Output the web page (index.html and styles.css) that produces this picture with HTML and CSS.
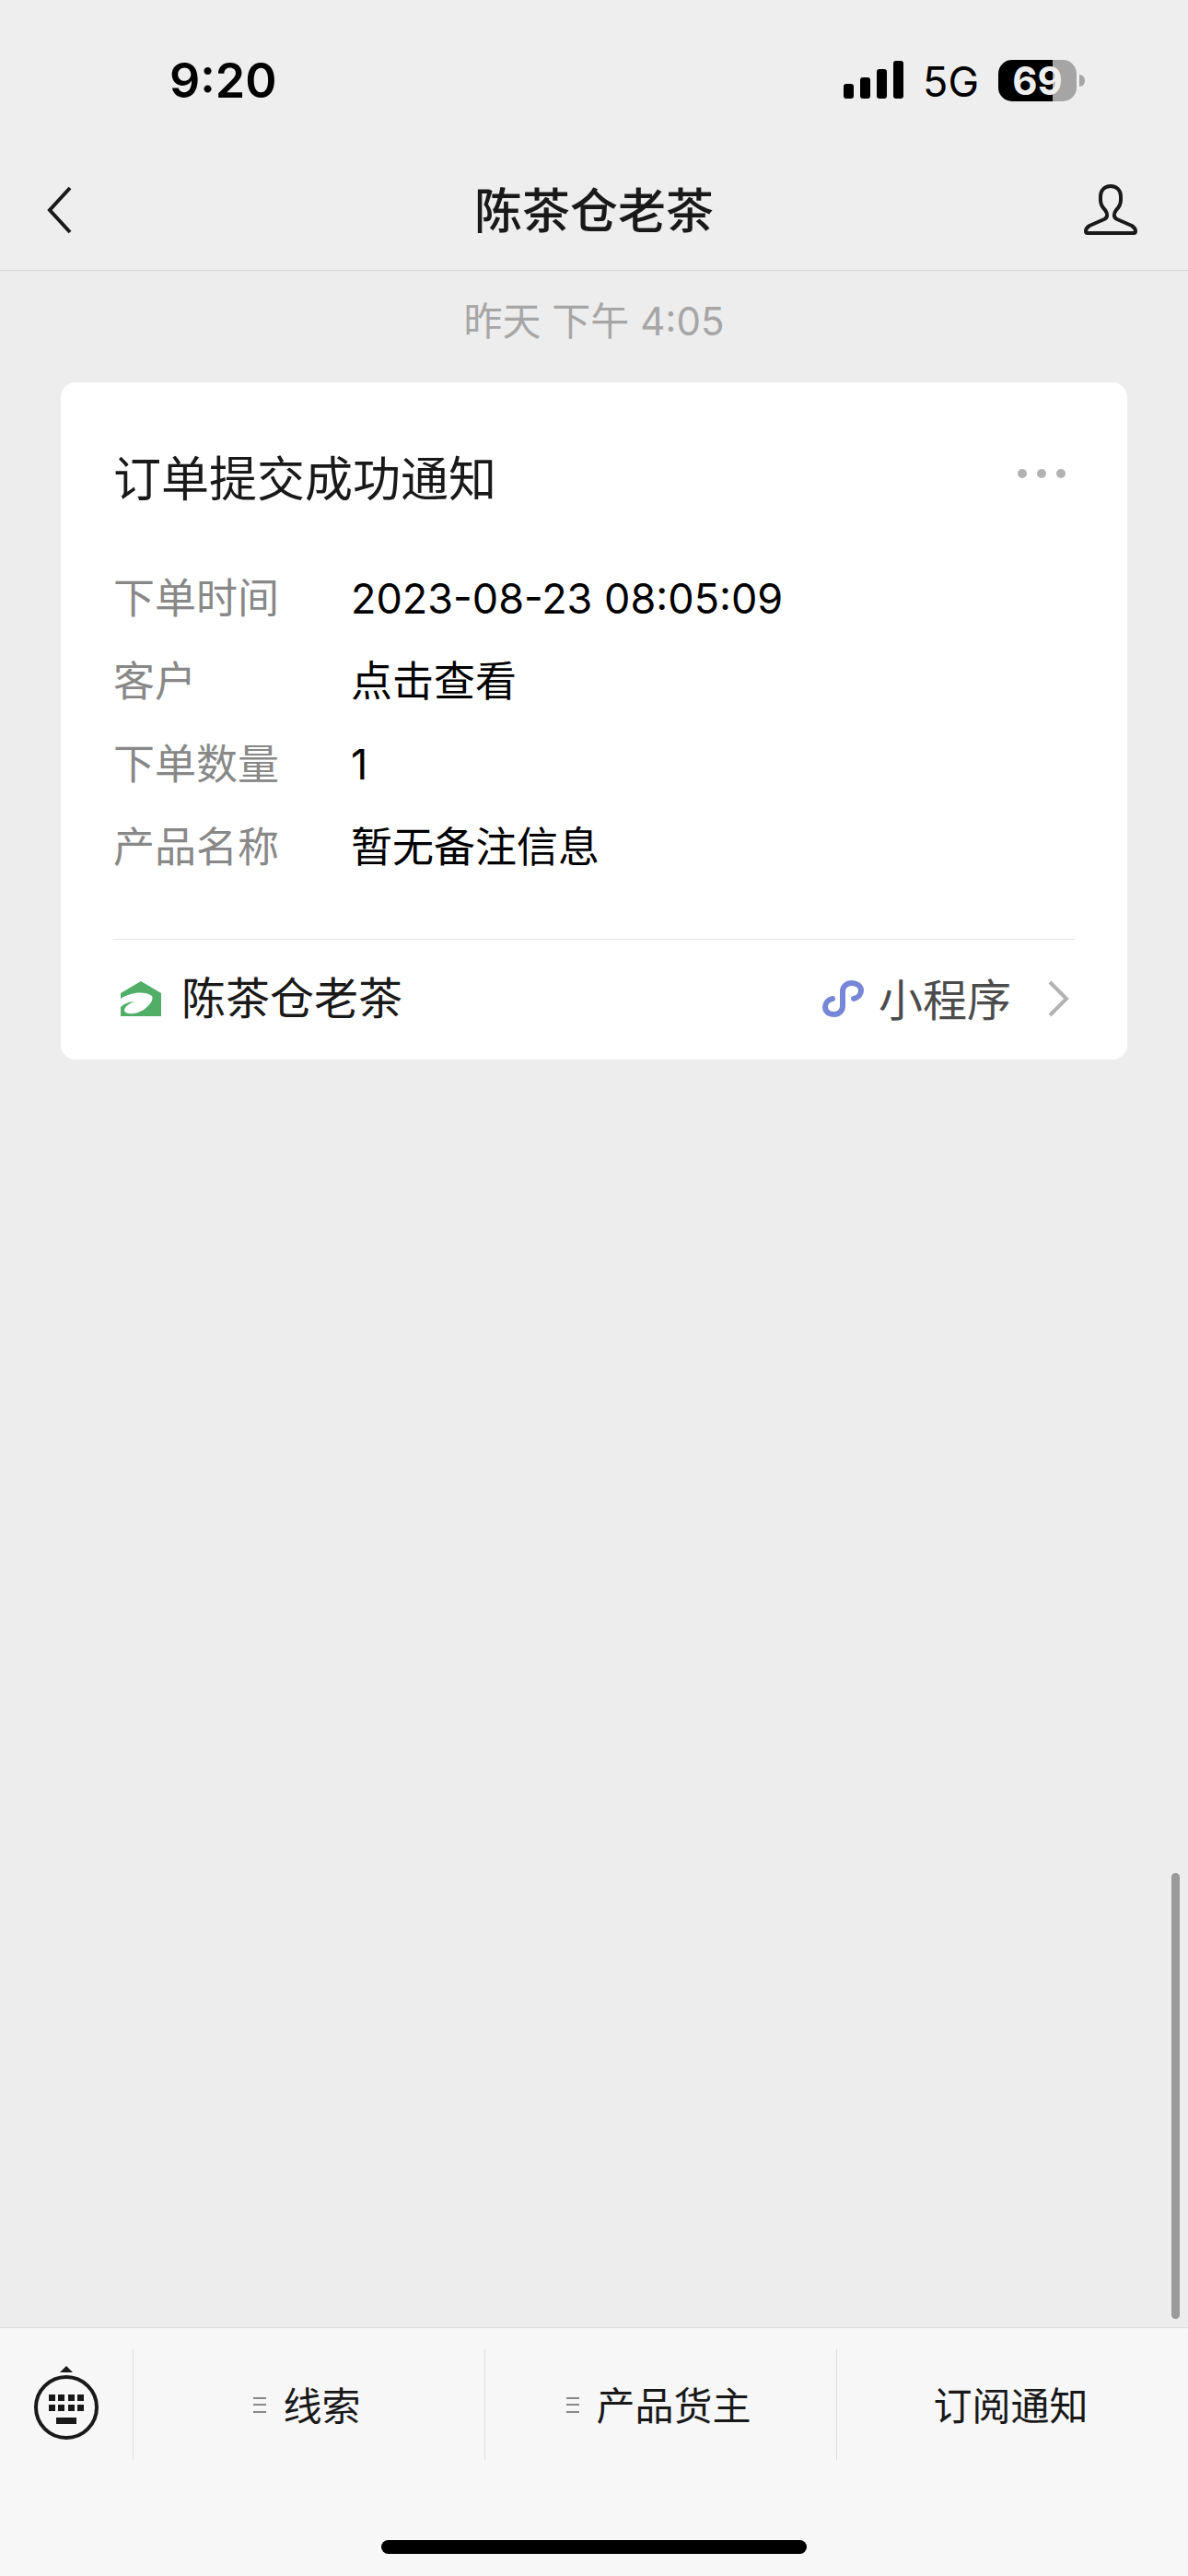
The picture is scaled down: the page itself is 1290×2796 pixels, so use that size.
FILE: index.html
```html
<!doctype html>
<html lang="zh-CN">
<head>
    <meta charset="utf-8">
    <meta name="viewport" content="width=device-width, initial-scale=1">
    <title>陈茶仓老茶</title>
    <link rel="stylesheet" href="styles.css">
</head>
<body>
    <header class="header">
        <div class="status-bar">
            <span class="time">9:20</span>
            <div class="status-icons">
                <svg class="signal" width="65" height="42" viewBox="0 0 65 42">
                    <rect x="0" y="25" width="11" height="16" rx="3"/>
                    <rect x="18" y="18" width="11" height="23" rx="3"/>
                    <rect x="36" y="9" width="11" height="32" rx="3"/>
                    <rect x="54" y="0" width="11" height="41" rx="3"/>
                </svg>
                <span class="network">5G</span>
                <div class="battery"><span class="battery-level">69</span></div>
            </div>
        </div>
        <nav class="nav-bar">
            <button class="icon-btn" type="button" aria-label="返回">
                <svg width="30" height="56" viewBox="0 0 30 56" fill="none" stroke="#191919" stroke-width="4">
                    <path d="M28 4 L6 28 L28 52"/>
                </svg>
            </button>
            <h1 class="nav-title">陈茶仓老茶</h1>
            <button class="icon-btn profile" type="button" aria-label="资料">
                <svg width="60" height="58" viewBox="0 0 60 58" fill="none" stroke="#191919" stroke-width="4" stroke-linejoin="round">
                    <path d="M30 3 C23 3 19 8 19 14 V18 C19 23 21 26 24 29 C27 33 27 37 23 39 L7 46 C4 48 3 49 3 52 C3 54 4 54 5 54 H55 C56 54 57 54 57 52 C57 49 56 48 53 46 L37 39 C33 37 33 33 36 29 C39 26 41 23 41 18 V14 C41 8 37 3 30 3 Z"/>
                </svg>
            </button>
        </nav>
    </header>

    <main class="messages">
        <p class="timestamp">昨天 下午 4:05</p>
        <article class="card">
            <div class="card-head">
                <h2 class="card-title">订单提交成功通知</h2>
                <button class="icon-btn more" type="button" aria-label="更多">
                    <svg width="54" height="12" viewBox="0 0 54 12" fill="#b2b2b2">
                        <circle cx="6" cy="6" r="5"/>
                        <circle cx="27" cy="6" r="5"/>
                        <circle cx="48" cy="6" r="5"/>
                    </svg>
                </button>
            </div>
            <dl class="details">
                <dt>下单时间</dt><dd>2023-08-23 08:05:09</dd>
                <dt>客户</dt><dd>点击查看</dd>
                <dt>下单数量</dt><dd>1</dd>
                <dt>产品名称</dt><dd>暂无备注信息</dd>
            </dl>
            <a class="card-foot" href="#">
                <svg class="logo" width="44" height="38" viewBox="0 0 44 38">
                    <path fill="#50ae67" d="M0 13 L22 0 L44 13 V38 H0 V28 C3 25 9 22 16 22 C9 24 4 28 4 32 C6 37 17 36 25 31 C32 26 36 20 34 16 C26 10 10 12 0 19 Z"/>
                </svg>
                <span class="source">陈茶仓老茶</span>
                <svg class="mini" width="45" height="40" viewBox="0 0 45 40" fill="none" stroke="#7886d7" stroke-width="6" stroke-linecap="round">
                    <path d="M34 20 C39 19 42 15 42 11 C42 6 37 3 32 3 C26 3 22 7 22 12 V28 C22 33 18 37 13 37 C7 37 3 34 3 29 C3 25 6 21 11 20"/>
                </svg>
                <span class="kind">小程序</span>
                <svg class="arrow" width="24" height="40" viewBox="0 0 24 40" fill="none" stroke="#b2b2b2" stroke-width="4">
                    <path d="M2 2 L20 20 L2 38"/>
                </svg>
            </a>
        </article>
        <div class="scroll-thumb"></div>
    </main>

    <footer class="footer">
        <div class="menu">
            <button class="keyboard" type="button" aria-label="键盘">
                <svg width="72" height="84" viewBox="0 0 72 84" fill="#191919">
                    <path d="M36 0 L43 7 H29 Z"/>
                    <circle cx="36" cy="45" r="33" fill="none" stroke="#191919" stroke-width="4"/>
                    <path d="M17 31h7v7h-7z M27 31h7v7h-7z M38 31h7v7h-7z M48 31h7v7h-7z M17 42h7v7h-7z M27 42h7v7h-7z M38 42h7v7h-7z M48 42h7v7h-7z M25 56h22v7h-22z"/>
                </svg>
            </button>
            <button class="menu-item" type="button"><span class="lines"></span><span class="menu-label">线索</span></button>
            <button class="menu-item" type="button"><span class="lines"></span><span class="menu-label">产品货主</span></button>
            <button class="menu-item" type="button"><span class="menu-label">订阅通知</span></button>
        </div>
        <div class="home-indicator"></div>
    </footer>
</body>
</html>
```
FILE: styles.css
```css
* {
    box-sizing: border-box;
}
body {
    margin: 0;
    min-height: 100vh;
    display: flex;
    flex-direction: column;
    background: #ededed;
    color: #191919;
    font-family: Inter, "Noto Sans CJK SC", sans-serif;
}
h1, h2, p, dl, dd {
    margin: 0;
    font-weight: 400;
}
button {
    border: 0;
    padding: 0;
    background: none;
    color: inherit;
    font: inherit;
}
svg {
    display: block;
}

/* Header */
.header {
    background: #eeeeee;
    border-bottom: 1px solid #d5d5d5;
}
.status-bar {
    height: 174px;
    padding: 0 121px 0 184px;
    display: flex;
    align-items: center;
    justify-content: space-between;
    color: #000;
}
.time {
    font-size: 52px;
    font-weight: 600;
}
.status-icons {
    display: flex;
    align-items: center;
    gap: 21px;
}
.network {
    font-size: 45px;
    line-height: 52px;
    padding-top: 4px;
}
.battery {
    position: relative;
    width: 85px;
    height: 45px;
    border-radius: 15px;
    background: linear-gradient(to right, #000 70%, #a5a5a5 70%);
    text-align: center;
}
.battery::after {
    content: "";
    position: absolute;
    right: -9px;
    top: 16px;
    width: 6px;
    height: 13px;
    border-radius: 0 6px 6px 0;
    background: #a5a5a5;
}
.battery-level {
    color: #eee;
    font-size: 42px;
    font-weight: 700;
    line-height: 45px;
}
.nav-bar {
    height: 119px;
    padding: 0 48px 12px;
    display: grid;
    grid-template-columns: 1fr auto 1fr;
    align-items: center;
}
.profile {
    justify-self: end;
    padding-right: 6px;
}
.nav-title {
    padding-top: 4px;
    font-size: 52px;
    font-weight: 500;
    line-height: 72px;
}

/* Messages */
.messages {
    position: relative;
    flex: 1;
    padding: 25px 66px;
}
.timestamp {
    color: #a6a6a6;
    font-size: 42px;
    line-height: 60px;
    text-align: center;
}
.card {
    margin-top: 36px;
    padding: 60px 57px 0;
    border-radius: 16px;
    background: #fff;
}
.card-head {
    display: flex;
    align-items: center;
    justify-content: space-between;
    padding-right: 9px;
}
.card-title {
    padding-top: 8px;
    font-size: 52px;
    line-height: 76px;
}
.more {
    padding-bottom: 6px;
}
.details {
    display: grid;
    grid-template-columns: 258px 1fr;
    padding: 46px 0 54px;
    font-size: 45px;
    line-height: 90px;
}
.details dt {
    color: #888;
}
.details dd {
    color: #000;
}
.card-foot {
    height: 131px;
    display: flex;
    align-items: center;
    padding: 0 5px 2px 8px;
    border-top: 1px solid #e5e5e5;
    color: #191919;
    font-size: 48px;
    text-decoration: none;
}
.source {
    flex: 1;
    margin-left: 22px;
    padding-bottom: 8px;
}
.kind {
    margin: 0 40px 0 16px;
    padding-bottom: 4px;
    color: #4c4c4c;
}
.scroll-thumb {
    position: absolute;
    right: 9px;
    bottom: 9px;
    width: 9px;
    height: 484px;
    border-radius: 5px;
    background: #9a9a9a;
}

/* Bottom menu */
.footer {
    padding: 23px 0 24px;
    border-top: 1px solid #dedede;
    background: #f7f7f7;
}
.menu {
    display: grid;
    grid-template-columns: 144px repeat(3, 1fr);
    height: 120px;
    font-size: 42px;
}
.keyboard {
    display: flex;
    align-items: center;
    justify-content: center;
}
.menu-item {
    display: flex;
    align-items: center;
    justify-content: center;
    gap: 18px;
    padding-right: 4px;
    border-left: 1px solid #dedede;
}
.menu-label {
    padding-bottom: 4px;
}
.lines {
    width: 14px;
    height: 17px;
    border-top: 2px solid #888;
    border-bottom: 2px solid #888;
    background: linear-gradient(#888, #888) center / 100% 2px no-repeat;
}
.home-indicator {
    width: 462px;
    height: 15px;
    margin: 87px auto 0;
    border-radius: 8px;
    background: #000;
}
```
